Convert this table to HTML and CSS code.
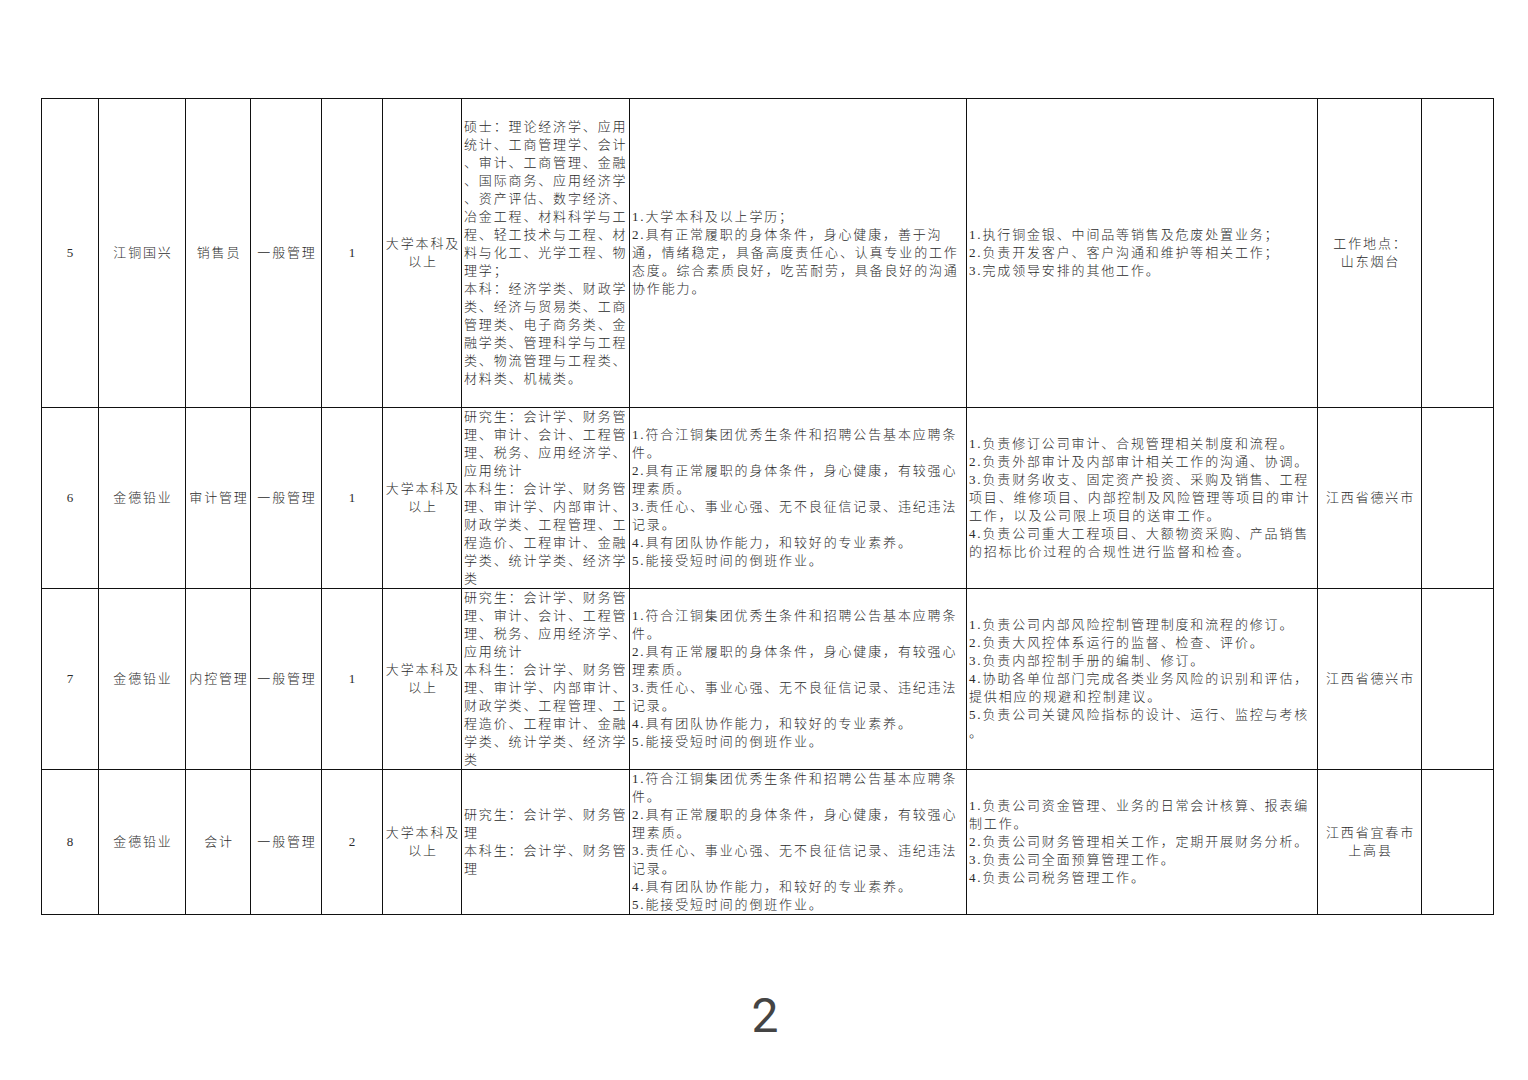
FILE: index.html
```html
<!DOCTYPE html>
<html lang="zh-CN">
<head>
<meta charset="utf-8">
<title>招聘岗位表</title>
<link rel="stylesheet" href="styles.css">
</head>
<body>
<div class="page">
  <table class="jobs">
    <colgroup>
      <col class="c-no"><col class="c-co"><col class="c-pos"><col class="c-type"><col class="c-num"><col class="c-edu"><col class="c-major"><col class="c-req"><col class="c-duty"><col class="c-loc"><col class="c-note">
    </colgroup>
    <tbody>
      <tr class="tall">
        <td class="ctr">5</td>
        <td class="ctr">江铜国兴</td>
        <td class="ctr">销售员</td>
        <td class="ctr">一般管理</td>
        <td class="ctr">1</td>
        <td class="ctr">大学本科及以上</td>
        <td class="txt">硕士：理论经济学、应用统计、工商管理学、会计、审计、工商管理、金融、国际商务、应用经济学、资产评估、数字经济、冶金工程、材料科学与工程、轻工技术与工程、材料与化工、光学工程、物理学；<br>本科：经济学类、财政学类、经济与贸易类、工商管理类、电子商务类、金融学类、管理科学与工程类、物流管理与工程类、材料类、机械类。</td>
        <td class="txt">1.大学本科及以上学历；<br>2.具有正常履职的身体条件，身心健康，善于沟<br>通，情绪稳定，具备高度责任心、认真专业的工作态度。综合素质良好，吃苦耐劳，具备良好的沟通协作能力。</td>
        <td class="txt">1.执行铜金银、中间品等销售及危废处置业务；<br>2.负责开发客户、客户沟通和维护等相关工作；<br>3.完成领导安排的其他工作。</td>
        <td class="ctr">工作地点：<br>山东烟台</td>
        <td></td>
      </tr>
      <tr>
        <td class="ctr">6</td>
        <td class="ctr">金德铅业</td>
        <td class="ctr">审计管理</td>
        <td class="ctr">一般管理</td>
        <td class="ctr">1</td>
        <td class="ctr">大学本科及以上</td>
        <td class="txt">研究生：会计学、财务管理、审计、会计、工程管理、税务、应用经济学、应用统计<br>本科生：会计学、财务管理、审计学、内部审计、财政学类、工程管理、工程造价、工程审计、金融学类、统计学类、经济学类</td>
        <td class="txt">1.符合江铜集团优秀生条件和招聘公告基本应聘条件。<br>2.具有正常履职的身体条件，身心健康，有较强心理素质。<br>3.责任心、事业心强、无不良征信记录、违纪违法记录。<br>4.具有团队协作能力，和较好的专业素养。<br>5.能接受短时间的倒班作业。</td>
        <td class="txt">1.负责修订公司审计、合规管理相关制度和流程。<br>2.负责外部审计及内部审计相关工作的沟通、协调。<br>3.负责财务收支、固定资产投资、采购及销售、工程项目、维修项目、内部控制及风险管理等项目的审计工作，以及公司限上项目的送审工作。<br>4.负责公司重大工程项目、大额物资采购、产品销售的招标比价过程的合规性进行监督和检查。</td>
        <td class="ctr">江西省德兴市</td>
        <td></td>
      </tr>
      <tr>
        <td class="ctr">7</td>
        <td class="ctr">金德铅业</td>
        <td class="ctr">内控管理</td>
        <td class="ctr">一般管理</td>
        <td class="ctr">1</td>
        <td class="ctr">大学本科及以上</td>
        <td class="txt">研究生：会计学、财务管理、审计、会计、工程管理、税务、应用经济学、应用统计<br>本科生：会计学、财务管理、审计学、内部审计、财政学类、工程管理、工程造价、工程审计、金融学类、统计学类、经济学类</td>
        <td class="txt">1.符合江铜集团优秀生条件和招聘公告基本应聘条件。<br>2.具有正常履职的身体条件，身心健康，有较强心理素质。<br>3.责任心、事业心强、无不良征信记录、违纪违法记录。<br>4.具有团队协作能力，和较好的专业素养。<br>5.能接受短时间的倒班作业。</td>
        <td class="txt">1.负责公司内部风险控制管理制度和流程的修订。<br>2.负责大风控体系运行的监督、检查、评价。<br>3.负责内部控制手册的编制、修订。<br>4.协助各单位部门完成各类业务风险的识别和评估，提供相应的规避和控制建议。<br>5.负责公司关键风险指标的设计、运行、监控与考核。</td>
        <td class="ctr">江西省德兴市</td>
        <td></td>
      </tr>
      <tr>
        <td class="ctr">8</td>
        <td class="ctr">金德铅业</td>
        <td class="ctr">会计</td>
        <td class="ctr">一般管理</td>
        <td class="ctr">2</td>
        <td class="ctr">大学本科及以上</td>
        <td class="txt">研究生：会计学、财务管理<br>本科生：会计学、财务管理</td>
        <td class="txt">1.符合江铜集团优秀生条件和招聘公告基本应聘条件。<br>2.具有正常履职的身体条件，身心健康，有较强心理素质。<br>3.责任心、事业心强、无不良征信记录、违纪违法记录。<br>4.具有团队协作能力，和较好的专业素养。<br>5.能接受短时间的倒班作业。</td>
        <td class="txt">1.负责公司资金管理、业务的日常会计核算、报表编制工作。<br>2.负责公司财务管理相关工作，定期开展财务分析。<br>3.负责公司全面预算管理工作。<br>4.负责公司税务管理工作。</td>
        <td class="ctr">江西省宜春市<br>上高县</td>
        <td></td>
      </tr>
    </tbody>
  </table>
  <div class="page-no">2</div>
</div>
</body>
</html>
```

FILE: styles.css
```css
html, body {
  margin: 0;
  padding: 0;
  background: #ffffff;
}

.page {
  width: 1528px;
  height: 1080px;
  box-sizing: border-box;
  padding: 98px 0 0 41px;
}

.jobs {
  width: 1452px;
  table-layout: fixed;
  border-collapse: collapse;
  font-family: "Liberation Serif", "Noto Sans CJK SC", serif;
  font-size: 13px;
  font-weight: 300;
  line-height: 18px;
  letter-spacing: 1.85px;
  color: #2b2b2b;
}

.c-no { width: 57px; }
.c-co { width: 87px; }
.c-pos { width: 65px; }
.c-type { width: 71px; }
.c-num { width: 61px; }
.c-edu { width: 79px; }
.c-major { width: 168px; }
.c-req { width: 337px; }
.c-duty { width: 351px; }
.c-loc { width: 104px; }
.c-note { width: 72px; }

.jobs td {
  border: 1.5px solid #111111;
  padding: 0 0 0 2px;
  vertical-align: middle;
  line-break: anywhere;
  word-break: break-all;
}

.jobs td.ctr {
  text-align: center;
  padding: 0 0 0 2px;
}

.jobs td.txt {
  text-align: left;
}

.jobs tr.tall {
  height: 309px;
}

.page-no {
  margin: 71px 0 0 0;
  width: 1452px;
  box-sizing: border-box;
  padding-right: 4px;
  text-align: center;
  font-family: "Roboto", "Noto Sans", sans-serif;
  font-size: 48px;
  line-height: 60px;
  color: #444444;
}
```
